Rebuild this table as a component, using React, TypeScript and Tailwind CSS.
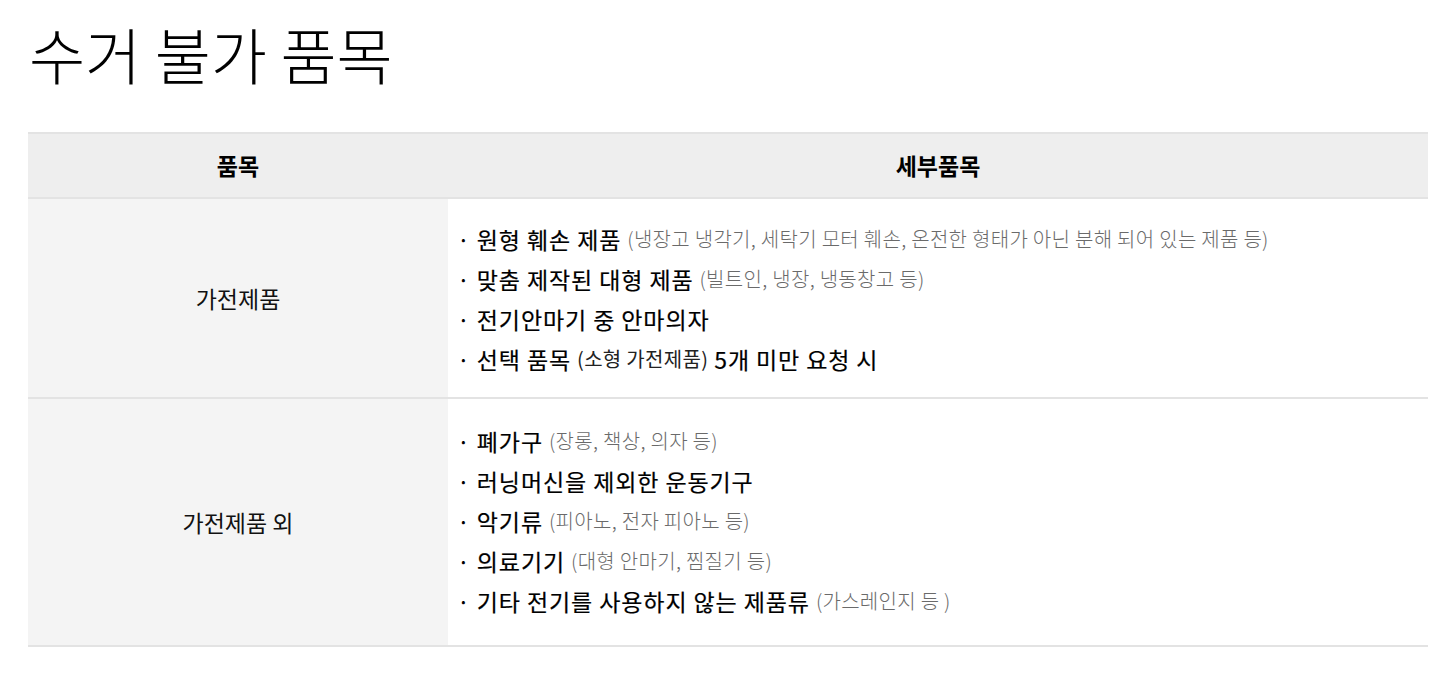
import React from 'react';

type Item = { main: string; sub?: string; subDark?: boolean; tail?: string };

const ROWS: { label: string; items: Item[]; pad: string }[] = [
  {
    label: '가전제품',
    pad: 'pt-5 pb-[18px]',
    items: [
      { main: '원형 훼손 제품', sub: '(냉장고 냉각기, 세탁기 모터 훼손, 온전한 형태가 아닌 분해 되어 있는 제품 등)' },
      { main: '맞춤 제작된 대형 제품', sub: '(빌트인, 냉장, 냉동창고 등)' },
      { main: '전기안마기 중 안마의자' },
      { main: '선택 품목', sub: '(소형 가전제품)', subDark: true, tail: '5개 미만 요청 시' },
    ],
  },
  {
    label: '가전제품 외',
    pad: 'pt-[22px] pb-6',
    items: [
      { main: '폐가구', sub: '(장롱, 책상, 의자 등)' },
      { main: '러닝머신을 제외한 운동기구' },
      { main: '악기류', sub: '(피아노, 전자 피아노 등)' },
      { main: '의료기기', sub: '(대형 안마기, 찜질기 등)' },
      { main: '기타 전기를 사용하지 않는 제품류', sub: '(가스레인지 등 )' },
    ],
  },
];

const font = "font-['Malgun_Gothic','Noto_Sans_CJK_KR',sans-serif]";

export default function App() {
  return (
    <div className={`min-h-screen bg-white ${font} text-black`}>
      <div className="pl-7 pt-[14px]">
        <h1 className="text-[61px] font-light leading-[80px] text-black pl-[1px]">
          수거 불가 품목
        </h1>
        <table className="mt-[38px] w-[1400px] border-collapse">
          <thead>
            <tr className="border-t-2 border-b-2 border-[#e3e3e3] bg-[#eeeeee]">
              <th className="w-[420px] h-[65px] text-[23px] font-bold">품목</th>
              <th className="h-[65px] text-[23px] font-bold">세부품목</th>
            </tr>
          </thead>
          <tbody>
            {ROWS.map((row) => (
              <tr key={row.label} className="border-b-2 border-[#e3e3e3]">
                <td className="bg-[#f4f4f4] text-center text-[23px] align-middle text-[#111]">{row.label}</td>
                <td className={`pl-[9px] ${row.pad}`}>
                  <ul>
                    {row.items.map((it) => (
                      <li
                        key={it.main}
                        className="h-10 flex items-center text-[23px] tracking-[0.9px] text-black whitespace-nowrap"
                      >
                        <span className="mr-[6px]">·</span>
                        <span className="[-webkit-text-stroke:0.2px_#000]">{it.main}</span>
                        {it.sub && (
                          <span
                            className={`ml-[6px] text-[20px] tracking-[0.3px] ${
                              it.subDark ? 'text-[#222]' : 'text-[#6a6a6a] font-light'
                            }`}
                          >
                            {it.sub}
                          </span>
                        )}
                        {it.tail && <span className="ml-[6px] [-webkit-text-stroke:0.2px_#000]">{it.tail}</span>}
                      </li>
                    ))}
                  </ul>
                </td>
              </tr>
            ))}
          </tbody>
        </table>
      </div>
    </div>
  );
}
